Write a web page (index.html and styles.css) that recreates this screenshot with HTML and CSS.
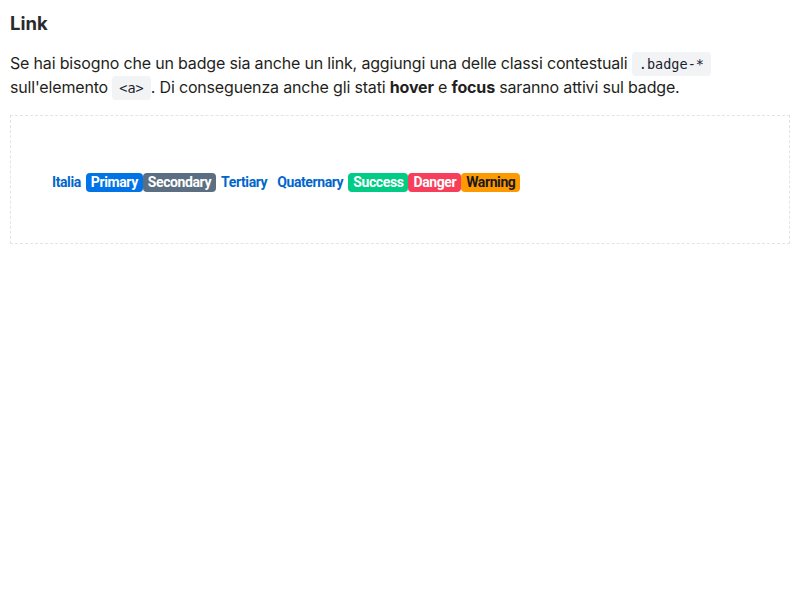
FILE: index.html
```html
<!DOCTYPE html>
<html lang="it">
<head>
<meta charset="utf-8">
<title>Link</title>
<link rel="stylesheet" href="styles.css">
</head>
<body>
<main class="doc">
  <h3 class="title">Link</h3>
  <p class="lead">Se hai bisogno che un badge sia anche un link, aggiungi una delle classi contestuali <code class="chip">.badge-*</code> sull'elemento <code class="chip">&lt;a&gt;</code>. Di conseguenza anche gli stati <strong>hover</strong> e <strong>focus</strong> saranno attivi sul badge.</p>
  <div class="example">
    <div class="badges">
      <a class="badge badge-plain">Italia</a>
      <a class="badge badge-primary">Primary</a>
      <a class="badge badge-secondary">Secondary</a>
      <a class="badge badge-plain">Tertiary</a>
      <a class="badge badge-plain">Quaternary</a>
      <a class="badge badge-success">Success</a>
      <a class="badge badge-danger">Danger</a>
      <a class="badge badge-warning">Warning</a>
    </div>
  </div>
</main>
</body>
</html>
```
FILE: styles.css
```css
html, body {
  margin: 0;
  padding: 0;
  background: #fff;
}
body {
  font-family: "Inter", "Helvetica Neue", Arial, sans-serif;
  color: #1f1f21;
}
.doc {
  padding: 10px 10px 0 10px;
}
.title {
  margin: 0 0 15px 0;
  font-size: 18.5px;
  line-height: 26px;
  font-weight: 700;
  color: #2a2a2c;
}
.lead {
  margin: 0 0 16px 0;
  font-size: 16px;
  line-height: 24px;
  letter-spacing: -0.17px;
}
.lead strong {
  font-weight: 700;
}
.chip {
  font-family: "DejaVu Sans Mono", monospace;
  font-size: 13.5px;
  line-height: 1;
  letter-spacing: 0;
  background: #f2f3f4;
  color: #1a2030;
  padding: 4px 7px;
  border-radius: 4px;
}
.example {
  border: 1px dashed #e3e4e6;
  padding: 57px 36px 51px 36px;
}
.badges {
  display: flex;
  align-items: center;
  flex-wrap: wrap;
}
.badge {
  display: inline-block;
  font-family: "Roboto", "DejaVu Sans Condensed", sans-serif;
  font-weight: 700;
  font-size: 14px;
  line-height: 19px;
  letter-spacing: -0.4px;
  padding: 0 5px;
  border-radius: 4px;
}
.badge-plain {
  color: #0066cc;
}
.badge-primary { background: #0073e6; color: #fff; }
.badge-secondary { background: #5c6f82; color: #fff; }
.badge-success { background: #00cc85; color: #fff; }
.badge-danger { background: #f73e5a; color: #fff; }
.badge-warning { background: #ff9900; color: #19191a; }
```
